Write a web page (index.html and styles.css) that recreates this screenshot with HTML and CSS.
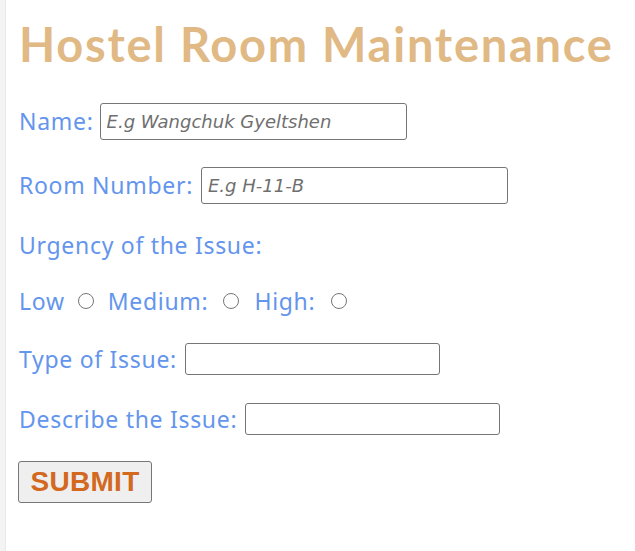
FILE: index.html
```html
<!DOCTYPE html>
<html lang="en">
<head>
<meta charset="utf-8">
<title>Hostel Room Maintenance</title>
<link rel="stylesheet" href="styles.css">
</head>
<body>
<main class="page">
  <h1 class="title">Hostel Room Maintenance</h1>
  <form class="form">
    <div class="row row--lg">
      <label class="label" for="name">Name:</label>
      <input class="field field--lg field--name" id="name" type="text" placeholder="E.g Wangchuk Gyeltshen">
    </div>
    <div class="row row--lg">
      <label class="label" for="room">Room Number:</label>
      <input class="field field--lg" id="room" type="text" placeholder="E.g H-11-B">
    </div>
    <div class="row row--text">
      <span class="label">Urgency of the Issue:</span>
    </div>
    <div class="row row--text">
      <label class="label">Low</label>
      <input class="radio radio--low" type="radio" name="urgency">
      <label class="label">Medium:</label>
      <input class="radio radio--mid" type="radio" name="urgency">
      <label class="label">High:</label>
      <input class="radio radio--high" type="radio" name="urgency">
    </div>
    <div class="row row--sm">
      <label class="label" for="type">Type of Issue:</label>
      <input class="field field--sm" id="type" type="text">
    </div>
    <div class="row row--sm">
      <label class="label" for="desc">Describe the Issue:</label>
      <input class="field field--sm" id="desc" type="text">
    </div>
    <div class="actions">
      <button class="submit" type="submit">SUBMIT</button>
    </div>
  </form>
</main>
</body>
</html>
```
FILE: styles.css
```css
html, body {
  margin: 0;
  padding: 0;
  background: #ffffff;
}

body {
  min-height: 551px;
  border-left: 5px solid #f4f4f4;
  box-shadow: inset 1px 0 0 #e9e9e9;
}

.page {
  padding: 16px 0 0 14px;
}

.title {
  margin: 0;
  font-family: Lato, "Open Sans", sans-serif;
  font-weight: 700;
  font-size: 47px;
  line-height: 56px;
  color: #e0b985;
  letter-spacing: 1.75px;
  white-space: nowrap;
}

.form {
  display: flex;
  flex-direction: column;
  gap: 20px;
  margin-top: 27px;
}

.row {
  display: flex;
  align-items: center;
}

.row--lg { height: 44px; }
.row--text { height: 36px; }
.row--sm { height: 40px; }

.label {
  font-family: "Noto Sans", "Open Sans", sans-serif;
  font-size: 23px;
  letter-spacing: 0.7px;
  color: #6495ed;
}

.field {
  box-sizing: border-box;
  margin: 0 0 0 8px;
  border: 1px solid #767676;
  border-radius: 3px;
  background: #ffffff;
  padding: 0 6px;
  outline: none;
}

.field--name {
  margin-left: 6px;
}

.field--lg {
  width: 307px;
  height: 37px;
  font-family: "DejaVu Sans", sans-serif;
  font-style: italic;
  font-size: 18px;
}

.field--lg::placeholder {
  color: #6f6f6f;
}

.field--sm {
  width: 255px;
  height: 32px;
  font-size: 16px;
}

.radio {
  appearance: none;
  -webkit-appearance: none;
  box-sizing: border-box;
  width: 16px;
  height: 16px;
  margin: 0 14px 0 13px;
  border: 1.5px solid #767676;
  border-radius: 50%;
  background: #ffffff;
}

.radio--mid { margin-right: 15px; margin-left: 15px; }
.radio--high { margin-left: 16px; }

.actions {
  margin-top: 2px;
}

.submit {
  box-sizing: border-box;
  width: 134px;
  height: 42px;
  margin: 0 0 0 -1px;
  padding: 0;
  border: 1px solid #767676;
  border-radius: 3px;
  background: #efefef;
  font-family: "Liberation Sans", Arial, sans-serif;
  font-weight: 700;
  font-size: 28px;
  letter-spacing: 0.3px;
  color: #d2691e;
}
```
